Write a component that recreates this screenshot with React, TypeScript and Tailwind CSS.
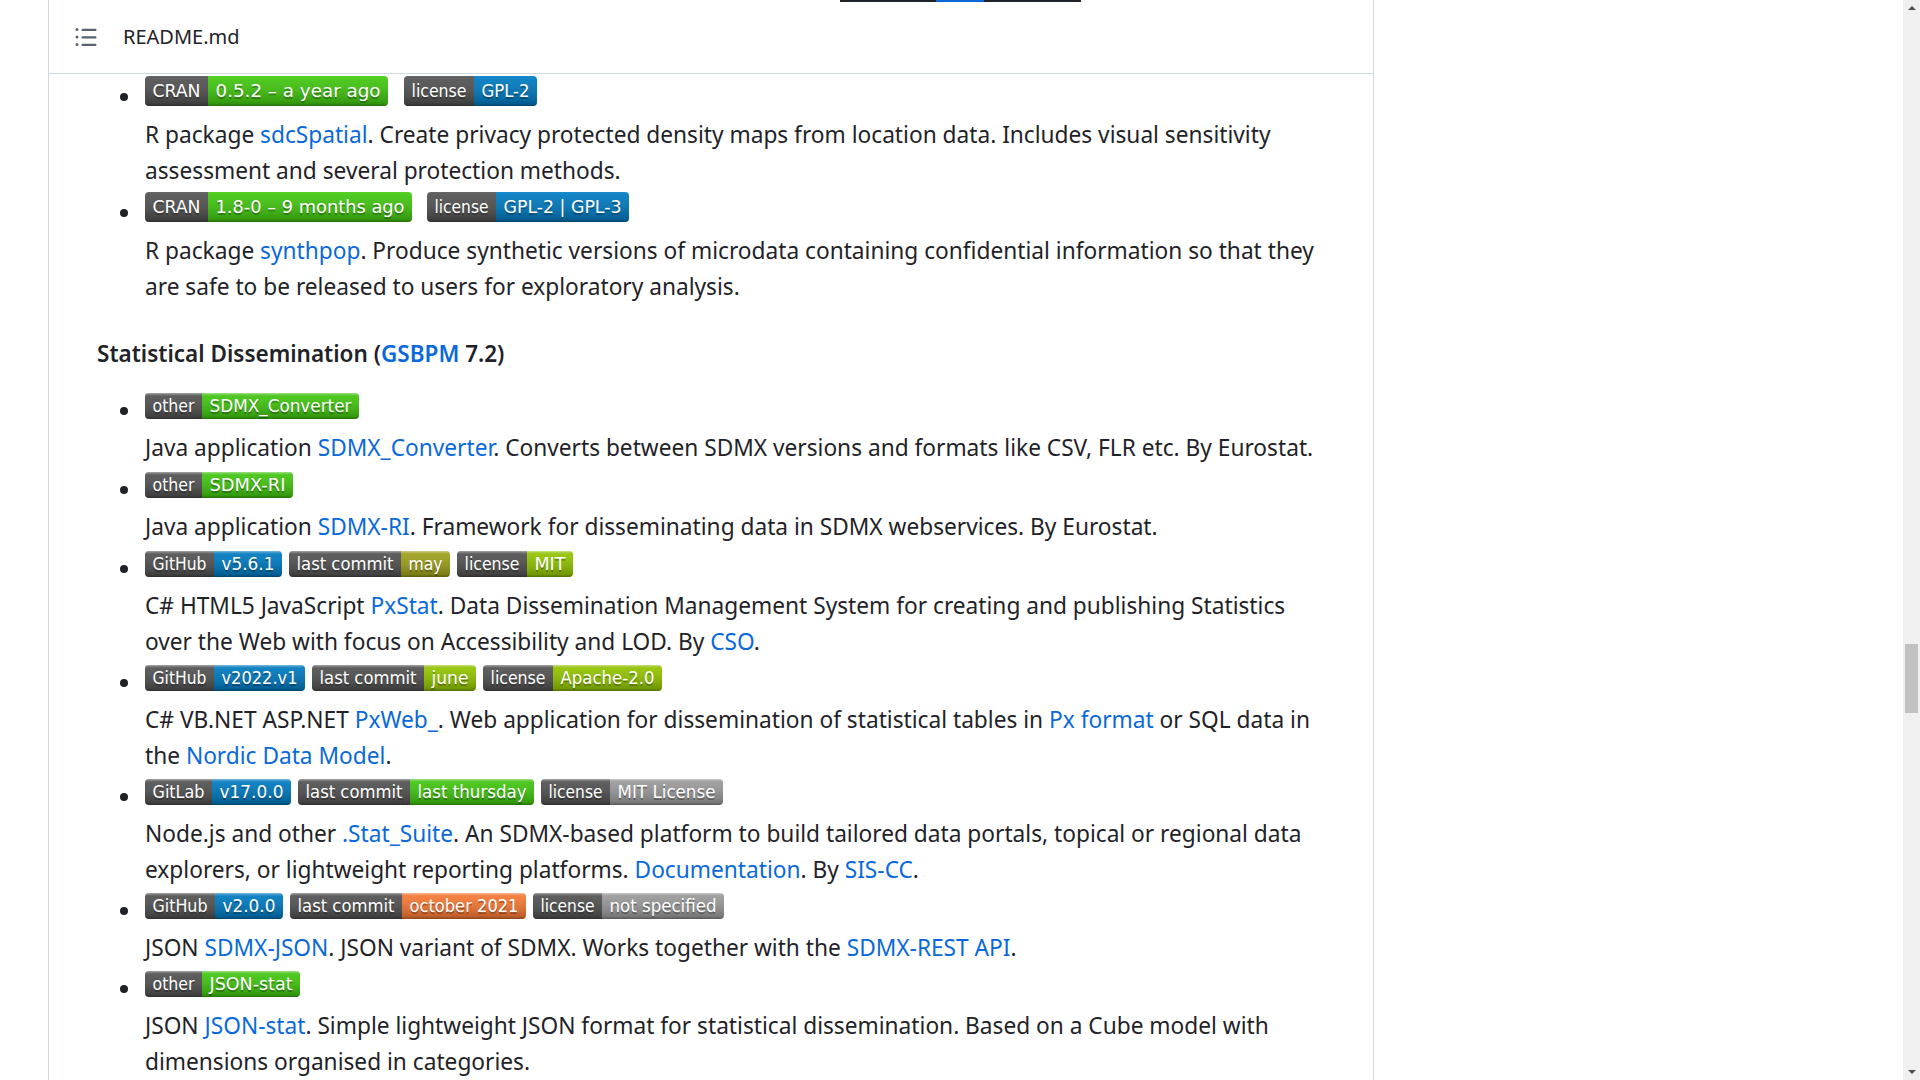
import React, { useId } from "react";

type Seg = { text: string; w: number };

interface IBadge {
  label: Seg;
  value: Seg;
  color: string;
  tall?: boolean;
}

const Badge = ({ label, value, color, tall }: IBadge) => {
  const id = useId().replace(/:/g, "");
  const h = tall ? 30 : 26;
  const total = label.w + value.w;
  const base = tall ? 21 : 19;
  const size = tall ? 18 : 17.5;
  return (
    <svg width={total} height={h} className="block shrink-0">
      <defs>
        <linearGradient id={`g${id}`} x2="0" y2="100%">
          <stop offset="0" stopColor="#fff" stopOpacity={tall ? ".1" : ".5"} />
          <stop offset=".12" stopColor="#aaa" stopOpacity=".1" />
          <stop offset=".9" stopColor="#000" stopOpacity=".25" />
          <stop offset="1" stopColor="#000" stopOpacity=".45" />
        </linearGradient>
        <clipPath id={`c${id}`}>
          <rect width={total} height={h} rx="4" fill="#fff" />
        </clipPath>
      </defs>
      <g clipPath={`url(#c${id})`}>
        <rect width={label.w} height={h} fill="#555" />
        <rect x={label.w} width={value.w} height={h} fill={color} />
        <rect width={total} height={h} fill={`url(#g${id})`} />
      </g>
      <g
        textAnchor="middle"
        fontFamily="DejaVu Sans, Verdana, sans-serif"
        fontSize={size}
      >
        <text
          x={label.w / 2}
          y={base + 1.5}
          fill="#010101"
          fillOpacity=".3"
          textLength={label.w - 15}
          lengthAdjust="spacingAndGlyphs"
        >
          {label.text}
        </text>
        <text
          x={label.w / 2}
          y={base}
          fill="#fff"
          textLength={label.w - 15}
          lengthAdjust="spacingAndGlyphs"
        >
          {label.text}
        </text>
        <text
          x={label.w + value.w / 2}
          y={base + 1.5}
          fill="#010101"
          fillOpacity=".3"
          textLength={value.w - 15}
          lengthAdjust="spacingAndGlyphs"
        >
          {value.text}
        </text>
        <text
          x={label.w + value.w / 2}
          y={base}
          fill="#fff"
          textLength={value.w - 15}
          lengthAdjust="spacingAndGlyphs"
        >
          {value.text}
        </text>
      </g>
    </svg>
  );
};

const A = ({ children }: { children: React.ReactNode }) => (
  <a href="#" className="text-[#0969da]">
    {children}
  </a>
);

const Item = ({
  badges,
  tall,
  gap,
  className,
  children,
}: {
  badges: IBadge[];
  tall?: boolean;
  gap: string;
  className: string;
  children: React.ReactNode;
}) => (
  <li className={`grid grid-cols-[48px_1fr] ${className}`}>
    <div>
      <div
        className={`${tall ? "mt-[17px]" : "mt-[14px]"} ml-[23px] h-[8px] w-[8px] rounded-full bg-[#1f2328]`}
      />
    </div>
    <div className="flex flex-col">
      <div className={`flex items-start ${gap} ${tall ? "h-[41px]" : "h-[37px]"}`}>
        {badges.map((b, i) => (
          <Badge key={i} {...b} tall={tall} />
        ))}
      </div>
      <p className="whitespace-nowrap text-[22.7px] leading-[36px]">{children}</p>
    </div>
  </li>
);

const GREEN = "#4c1";
const BLUE = "#007ec6";
const LIME = "#97ca00";
const GREY = "#9f9f9f";

const App = () => {
  return (
    <div className="flex h-[1080px] w-[1920px] overflow-hidden bg-white font-['Noto_Sans',sans-serif] text-[#1f2328]">
      <div className="flex flex-1">
        <div className="ml-[48px] flex w-[1326px] flex-col border-x border-[#d1d9e0]">
          <div className="flex h-[74px] flex-col border-b border-[#d1d9e0]">
            <div className="ml-[791px] flex h-[2px]">
              <div className="w-[96px] bg-[#1f2328]" />
              <div className="w-[48px] bg-[#0969da]" />
              <div className="w-[97px] bg-[#1f2328]" />
            </div>
            <div className="flex flex-1 items-center gap-[25px] pb-[2px] pl-[25px]">
              <svg width="24" height="24" viewBox="0 0 16 16" fill="#59636e">
                <path d="M5.75 2.5h8.5a.75.75 0 0 1 0 1.5h-8.5a.75.75 0 0 1 0-1.5Zm0 5h8.5a.75.75 0 0 1 0 1.5h-8.5a.75.75 0 0 1 0-1.5Zm0 5h8.5a.75.75 0 0 1 0 1.5h-8.5a.75.75 0 0 1 0-1.5ZM2 14a1 1 0 1 1 0-2 1 1 0 0 1 0 2Zm1-6a1 1 0 1 1-2 0 1 1 0 0 1 2 0ZM2 4a1 1 0 1 1 0-2 1 1 0 0 1 0 2Z" />
              </svg>
              <span className="text-[20px] text-[#1f2328]">README.md</span>
            </div>
          </div>

          <div className="pl-[48px] pt-[2px]">
            <ul>
              <Item
                tall
                gap="gap-[16px]"
                className=""
                badges={[
                  { label: { text: "CRAN", w: 63 }, value: { text: "0.5.2 – a year ago", w: 180 }, color: GREEN },
                  { label: { text: "license", w: 70 }, value: { text: "GPL-2", w: 63 }, color: BLUE },
                ]}
              >
                R package <A>sdcSpatial</A>. Create privacy protected density maps from location data. Includes visual sensitivity
                <br />
                assessment and several protection methods.
              </Item>
              <Item
                tall
                gap="gap-[15px]"
                className="mt-[3px]"
                badges={[
                  { label: { text: "CRAN", w: 63 }, value: { text: "1.8-0 – 9 months ago", w: 204 }, color: GREEN },
                  { label: { text: "license", w: 69 }, value: { text: "GPL-2 | GPL-3", w: 133 }, color: BLUE },
                ]}
              >
                R package <A>synthpop</A>. Produce synthetic versions of microdata containing confidential information so that they
                <br />
                are safe to be released to users for exploratory analysis.
              </Item>
            </ul>

            <h4 className="mt-[34px] text-[22.5px] font-semibold leading-[30px]">
              Statistical Dissemination (<A>GSBPM</A> 7.2)
            </h4>

            <ul className="mt-[24px]">
              <Item
                gap="gap-[7px]"
                className=""
                badges={[{ label: { text: "other", w: 57 }, value: { text: "SDMX_Converter", w: 157 }, color: GREEN }]}
              >
                Java application <A>SDMX_Converter</A>. Converts between SDMX versions and formats like CSV, FLR etc. By Eurostat.
              </Item>
              <Item
                gap="gap-[7px]"
                className="mt-[6px]"
                badges={[{ label: { text: "other", w: 57 }, value: { text: "SDMX-RI", w: 91 }, color: GREEN }]}
              >
                Java application <A>SDMX-RI</A>. Framework for disseminating data in SDMX webservices. By Eurostat.
              </Item>
              <Item
                gap="gap-[7px]"
                className="mt-[6px]"
                badges={[
                  { label: { text: "GitHub", w: 69 }, value: { text: "v5.6.1", w: 68 }, color: BLUE },
                  { label: { text: "last commit", w: 112 }, value: { text: "may", w: 49 }, color: "#a4a61d" },
                  { label: { text: "license", w: 70 }, value: { text: "MIT", w: 46 }, color: LIME },
                ]}
              >
                C# HTML5 JavaScript <A>PxStat</A>. Data Dissemination Management System for creating and publishing Statistics
                <br />
                over the Web with focus on Accessibility and LOD. By <A>CSO</A>.
              </Item>
              <Item
                gap="gap-[7px]"
                className="mt-[5px]"
                badges={[
                  { label: { text: "GitHub", w: 69 }, value: { text: "v2022.v1", w: 91 }, color: BLUE },
                  { label: { text: "last commit", w: 112 }, value: { text: "june", w: 52 }, color: LIME },
                  { label: { text: "license", w: 70 }, value: { text: "Apache-2.0", w: 109 }, color: LIME },
                ]}
              >
                C# VB.NET ASP.NET <A>PxWeb_</A>. Web application for dissemination of statistical tables in <A>Px format</A> or SQL data in
                <br />
                the <A>Nordic Data Model</A>.
              </Item>
              <Item
                gap="gap-[7px]"
                className="mt-[5px]"
                badges={[
                  { label: { text: "GitLab", w: 67 }, value: { text: "v17.0.0", w: 79 }, color: BLUE },
                  { label: { text: "last commit", w: 112 }, value: { text: "last thursday", w: 124 }, color: GREEN },
                  { label: { text: "license", w: 69 }, value: { text: "MIT License", w: 113 }, color: GREY },
                ]}
              >
                Node.js and other <A>.Stat_Suite</A>. An SDMX-based platform to build tailored data portals, topical or regional data
                <br />
                explorers, or lightweight reporting platforms. <A>Documentation</A>. By <A>SIS-CC</A>.
              </Item>
              <Item
                gap="gap-[7px]"
                className="mt-[5px]"
                badges={[
                  { label: { text: "GitHub", w: 70 }, value: { text: "v2.0.0", w: 68 }, color: BLUE },
                  { label: { text: "last commit", w: 112 }, value: { text: "october 2021", w: 124 }, color: "#fe7d37" },
                  { label: { text: "license", w: 69 }, value: { text: "not specified", w: 122 }, color: GREY },
                ]}
              >
                JSON <A>SDMX-JSON</A>. JSON variant of SDMX. Works together with the <A>SDMX-REST API</A>.
              </Item>
              <Item
                gap="gap-[7px]"
                className="mt-[5px]"
                badges={[{ label: { text: "other", w: 57 }, value: { text: "JSON-stat", w: 98 }, color: GREEN }]}
              >
                JSON <A>JSON-stat</A>. Simple lightweight JSON format for statistical dissemination. Based on a Cube model with
                <br />
                dimensions organised in categories.
              </Item>
            </ul>
          </div>
        </div>
      </div>

      {/* scrollbar */}
      <div className="flex w-[17px] flex-col items-center bg-[#f0f0f0]">
        <div className="mt-[6px] h-0 w-0 border-x-[4px] border-b-[4px] border-x-transparent border-b-[#505050]" />
        <div className="mt-[634px] h-[69px] w-[13px] bg-[#c1c1c1]" />
        <div className="flex-1" />
        <div className="mb-[6px] h-0 w-0 border-x-[4px] border-t-[4px] border-x-transparent border-t-[#505050]" />
      </div>
    </div>
  );
};

export default App;
